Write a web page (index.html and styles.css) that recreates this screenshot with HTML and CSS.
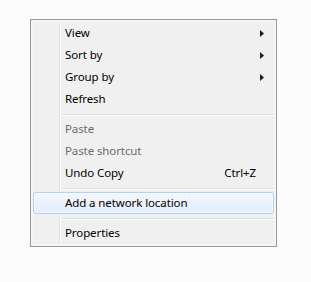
FILE: index.html
```html
<!DOCTYPE html>
<html lang="en">
<head>
    <meta charset="UTF-8">
    <meta name="viewport" content="width=device-width, initial-scale=1.0">
    <title>Context Menu</title>
    <link rel="stylesheet" href="styles.css">
</head>
<body>
    <div class="menu">
        <ul class="menu-list">
            <li class="item">View<svg class="arrow" width="4" height="7" viewBox="0 0 4 7"><path d="M0 0 L4 3.5 L0 7 Z"/></svg></li>
            <li class="item">Sort by<svg class="arrow" width="4" height="7" viewBox="0 0 4 7"><path d="M0 0 L4 3.5 L0 7 Z"/></svg></li>
            <li class="item">Group by<svg class="arrow" width="4" height="7" viewBox="0 0 4 7"><path d="M0 0 L4 3.5 L0 7 Z"/></svg></li>
            <li class="item">Refresh</li>
            <li class="sep"></li>
            <li class="item disabled">Paste</li>
            <li class="item disabled">Paste shortcut</li>
            <li class="item">Undo Copy<span class="shortcut">Ctrl+Z</span></li>
            <li class="sep"></li>
            <li class="item active">Add a network location</li>
            <li class="sep"></li>
            <li class="item">Properties</li>
        </ul>
    </div>
</body>
</html>
```

FILE: styles.css
```css
body {
    margin: 0;
    background-color: #fcfcfc;
    font-family: "Noto Sans", "Open Sans", sans-serif;
    font-size: 11.5px;
    letter-spacing: -0.1px;
    color: #000;
}
.menu {
    width: 241px;
    margin: 19px 0 0 30px;
    padding: 2px;
    border: 1px solid #979797;
    background-color: #f5f5f5;
}
.menu-list {
    list-style: none;
    margin: 0;
    padding: 0;
    background-color: #f0f0f0;
    background-image: linear-gradient(to right, transparent 26px, #e2e3e3 26px, #e2e3e3 27px, #fff 27px, #fff 28px, transparent 28px);
}
.item {
    display: flex;
    align-items: center;
    box-sizing: border-box;
    height: 22px;
    padding: 0 9px 1px 31px;
    border: 1px solid transparent;
    border-radius: 3px;
}
.item.disabled {
    color: #6d6d6d;
}
.item.active {
    border-color: #aecff7;
    background: linear-gradient(#f3f7fd, #e5eefa);
    box-shadow: inset 0 0 0 1px rgba(255, 255, 255, 0.5);
}
.arrow {
    margin-left: auto;
    margin-top: 1px;
    fill: #1e1e1e;
}
.shortcut {
    margin-left: auto;
    margin-right: 8px;
}
.sep {
    height: 8px;
    margin-left: 28px;
    background: linear-gradient(transparent 4px, #e0e0e0 4px, #e0e0e0 5px, #fff 5px, #fff 6px, transparent 6px);
}
```
